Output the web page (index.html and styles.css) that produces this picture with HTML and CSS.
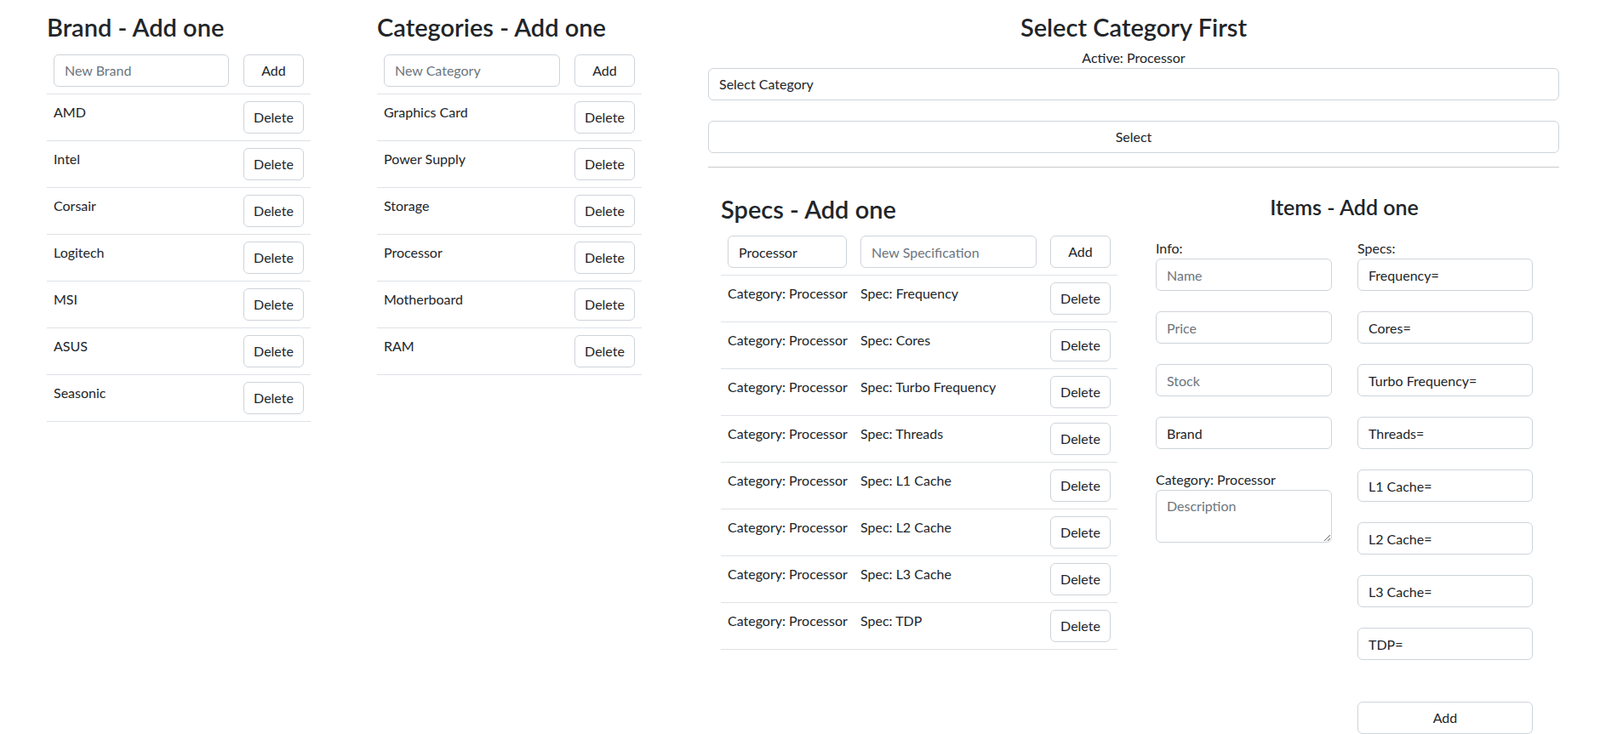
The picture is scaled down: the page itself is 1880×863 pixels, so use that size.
FILE: index.html
```html
<!DOCTYPE html>
<html lang="en">
<head>
<meta charset="utf-8">
<title>Admin</title>
<link rel="stylesheet" href="styles.css">
</head>
<body>
<div class="page">
  <section class="col col-brand">
    <h3 class="title">Brand - Add one</h3>
    <div class="list-head">
      <input class="input grow" type="text" placeholder="New Brand">
      <button class="btn">Add</button>
    </div>
    <div class="row"><span class="grow">AMD</span><button class="btn">Delete</button></div>
    <div class="row"><span class="grow">Intel</span><button class="btn">Delete</button></div>
    <div class="row"><span class="grow">Corsair</span><button class="btn">Delete</button></div>
    <div class="row"><span class="grow">Logitech</span><button class="btn">Delete</button></div>
    <div class="row"><span class="grow">MSI</span><button class="btn">Delete</button></div>
    <div class="row"><span class="grow">ASUS</span><button class="btn">Delete</button></div>
    <div class="row"><span class="grow">Seasonic</span><button class="btn">Delete</button></div>
  </section>

  <section class="col col-cat">
    <h3 class="title">Categories - Add one</h3>
    <div class="list-head">
      <input class="input grow" type="text" placeholder="New Category">
      <button class="btn">Add</button>
    </div>
    <div class="row"><span class="grow">Graphics Card</span><button class="btn">Delete</button></div>
    <div class="row"><span class="grow">Power Supply</span><button class="btn">Delete</button></div>
    <div class="row"><span class="grow">Storage</span><button class="btn">Delete</button></div>
    <div class="row"><span class="grow">Processor</span><button class="btn">Delete</button></div>
    <div class="row"><span class="grow">Motherboard</span><button class="btn">Delete</button></div>
    <div class="row"><span class="grow">RAM</span><button class="btn">Delete</button></div>
  </section>

  <section class="col col-main">
    <h3 class="title center">Select Category First</h3>
    <div class="active">Active: Processor</div>
    <select class="input select">
      <option>Select Category</option>
    </select>
    <button class="btn wide select-btn">Select</button>
    <hr class="divider">

    <div class="lower">
      <div class="specs">
        <h3 class="title">Specs - Add one</h3>
        <div class="list-head spec-head">
          <input class="input cat-input" type="text" value="Processor">
          <input class="input spec-input" type="text" placeholder="New Specification">
          <button class="btn">Add</button>
        </div>
        <div class="row"><span class="cat-cell">Category: Processor</span><span class="grow">Spec: Frequency</span><button class="btn">Delete</button></div>
        <div class="row"><span class="cat-cell">Category: Processor</span><span class="grow">Spec: Cores</span><button class="btn">Delete</button></div>
        <div class="row"><span class="cat-cell">Category: Processor</span><span class="grow">Spec: Turbo Frequency</span><button class="btn">Delete</button></div>
        <div class="row"><span class="cat-cell">Category: Processor</span><span class="grow">Spec: Threads</span><button class="btn">Delete</button></div>
        <div class="row"><span class="cat-cell">Category: Processor</span><span class="grow">Spec: L1 Cache</span><button class="btn">Delete</button></div>
        <div class="row"><span class="cat-cell">Category: Processor</span><span class="grow">Spec: L2 Cache</span><button class="btn">Delete</button></div>
        <div class="row"><span class="cat-cell">Category: Processor</span><span class="grow">Spec: L3 Cache</span><button class="btn">Delete</button></div>
        <div class="row"><span class="cat-cell">Category: Processor</span><span class="grow">Spec: TDP</span><button class="btn">Delete</button></div>
      </div>

      <div class="items">
        <h4 class="subtitle">Items - Add one</h4>
        <div class="items-grid">
          <div class="items-col info-col">
            <div class="label">Info:</div>
            <input class="input field" type="text" placeholder="Name">
            <input class="input field" type="text" placeholder="Price">
            <input class="input field" type="text" placeholder="Stock">
            <input class="input field" type="text" value="Brand">
            <div class="label">Category: Processor</div>
            <textarea class="input textarea" rows="2" placeholder="Description"></textarea>
          </div>
          <div class="items-col spec-col">
            <div class="label">Specs:</div>
            <input class="input field" type="text" value="Frequency=">
            <input class="input field" type="text" value="Cores=">
            <input class="input field" type="text" value="Turbo Frequency=">
            <input class="input field" type="text" value="Threads=">
            <input class="input field" type="text" value="L1 Cache=">
            <input class="input field" type="text" value="L2 Cache=">
            <input class="input field" type="text" value="L3 Cache=">
            <input class="input field" type="text" value="TDP=">
            <button class="btn wide add-item">Add</button>
          </div>
        </div>
      </div>
    </div>
  </section>
</div>
</body>
</html>
```
FILE: styles.css
```css
* { box-sizing: border-box; }

body {
  margin: 0;
  font-family: Lato, "Open Sans", "Liberation Sans", sans-serif;
  font-size: 16px;
  line-height: 1.5;
  color: #212529;
  background: #fff;
}

.page {
  display: flex;
  align-items: flex-start;
  gap: 78px;
  padding: 14px 0 0 55px;
}

.col-brand { width: 310px; }
.col-cat { width: 311px; }
.col-main { width: 1000px; }

.title {
  font-size: 29px;
  font-weight: 600;
  line-height: 33.6px;
  padding-top: 1px;
  margin: 0 0 7px;
  white-space: nowrap;
}

.center { text-align: center; }

.subtitle {
  font-size: 25px;
  font-weight: 600;
  line-height: 28.8px;
  padding-top: 1px;
  margin: 0 0 23px;
  text-align: center;
  white-space: nowrap;
}

.input {
  display: block;
  height: 38px;
  padding: 6px 12px;
  border: 1px solid #ced4da;
  border-radius: 6px;
  background: #fff;
  font: inherit;
  line-height: 24px;
  color: #212529;
  outline: none;
}

.input::placeholder { color: #6c757d; opacity: 1; }

.btn {
  width: 71px;
  height: 38px;
  flex: none;
  padding: 0;
  border: 1px solid #ced4da;
  border-radius: 6px;
  background: #fff;
  font: inherit;
  line-height: 24px;
  color: #212529;
  text-align: center;
}

.btn.wide { width: 100%; }

.grow { flex: 1 1 auto; min-width: 0; }

.list-head {
  display: flex;
  gap: 17px;
  padding: 8px;
  border-bottom: 1px solid #dee2e6;
}

.row {
  display: flex;
  align-items: flex-start;
  gap: 16px;
  padding: 8px;
  border-bottom: 1px solid #dee2e6;
}

.row > span { padding-top: 1px; }

.active {
  text-align: center;
  line-height: 24px;
}

.select {
  width: 100%;
  appearance: none;
  -webkit-appearance: none;
}

.select-btn { margin-top: 24px; }

.divider {
  margin: 16px 0;
  border: 0;
  border-top: 1px solid #c8c9ca;
  height: 0;
}

.lower {
  display: flex;
  align-items: flex-start;
  padding: 15px 0 0 15px;
}

.specs { width: 466px; }

.spec-head { gap: 16px; }
.cat-input { width: 140px; flex: none; }
.spec-input { width: 207px; flex: none; }
.cat-cell { width: 140px; flex: none; white-space: nowrap; }

.items {
  width: 443px;
  margin-left: 45px;
}

.items-grid {
  display: flex;
  gap: 30px;
}

.info-col { width: 207px; }
.spec-col { width: 206px; }

.label { line-height: 24px; }

.field {
  width: 100%;
  margin-bottom: 24px;
}

.textarea {
  width: 100%;
  height: 62px;
  resize: vertical;
}

.add-item { margin-top: 25px; }
```
